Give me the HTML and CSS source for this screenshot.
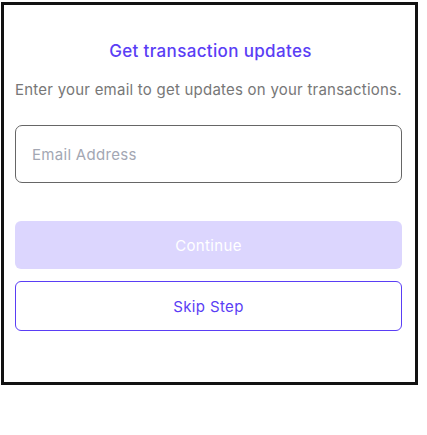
FILE: index.html
```html
<!DOCTYPE html>
<html>
<head>
<meta charset="utf-8">
<link rel="stylesheet" href="styles.css">
</head>
<body>
<div class="frame">
  <h1 class="title">Get transaction updates</h1>
  <p class="desc">Enter your email to get updates on your transactions.</p>
  <div class="input"><span class="placeholder">Email Address</span></div>
  <button class="btn primary">Continue</button>
  <button class="btn outline">Skip Step</button>
</div>
</body>
</html>
```
FILE: styles.css
```css
html, body { margin: 0; padding: 0; background: #fff; }
body { font-family: Inter, "Noto Sans", sans-serif; }
.frame {
  box-sizing: border-box;
  margin: 2px 0 0 1px;
  width: 417px;
  height: 383px;
  border: 3px solid #111;
  padding: 0 13px 0 11px;
  display: flex;
  flex-direction: column;
}
.title {
  margin: 35px 0 0;
  padding-left: 4px;
  font-size: 17px;
  font-weight: 500;
  color: #5a3ef5;
  text-align: center;
  line-height: 22px;
  letter-spacing: 0.35px;
}
.desc {
  margin: 18px 0 0;
  font-size: 15px;
  color: #777;
  line-height: 20px;
  white-space: nowrap;
  letter-spacing: 0.23px;
}
.input {
  margin-top: 25px;
  height: 58px;
  box-sizing: border-box;
  border: 1px solid #666;
  border-radius: 7px;
  display: flex;
  align-items: center;
  padding-left: 16px;
}
.placeholder { font-size: 15px; color: #a3a7b3; letter-spacing: 0.3px; }
.btn {
  font-family: inherit;
  font-size: 15px;
  letter-spacing: 0.35px;
  width: 100%;
  box-sizing: border-box;
  border-radius: 6px;
  display: flex;
  align-items: center;
  justify-content: center;
}
.primary {
  margin-top: 38px;
  height: 48px;
  background: #dcd6fe;
  color: #fff;
  border: none;
}
.outline {
  margin-top: 12px;
  height: 50px;
  background: #fff;
  border: 1px solid #5a3ef5;
  color: #5a3ef5;
}
```
